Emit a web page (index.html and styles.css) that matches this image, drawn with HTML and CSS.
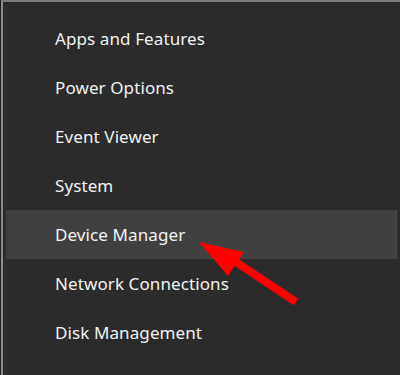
FILE: index.html
```html
<!DOCTYPE html>
<html lang="en">
  <head>
    <meta charset="UTF-8" />
    <meta name="viewport" content="width=device-width, initial-scale=1.0" />
    <title>Quick Link Menu</title>
    <link rel="stylesheet" href="styles.css">
  </head>
  <body>
    <div class="menu">
      <ul class="menu-list">
        <li class="menu-item">Apps and Features</li>
        <li class="menu-item">Power Options</li>
        <li class="menu-item">Event Viewer</li>
        <li class="menu-item">System</li>
        <li class="menu-item active">Device Manager</li>
        <li class="menu-item">Network Connections</li>
        <li class="menu-item">Disk Management</li>
      </ul>

      <!-- red pointer drawn over the menu -->
      <svg class="pointer" width="400" height="375" viewBox="0 0 400 375">
        <line x1="236" y1="262" x2="296" y2="302" stroke="#ff0000" stroke-width="8" />
        <polygon points="199,242 244,252 228,276" fill="#ff0000" />
      </svg>
    </div>
  </body>
</html>
```

FILE: styles.css
```css
html,
body {
  margin: 0;
  height: 100%;
}
body {
  background-color: #1f1f1f;
  font-family: "Noto Sans", "Open Sans", sans-serif;
}
.menu {
  position: relative;
  height: 373px;
  margin-left: 1px;
  background-color: #2b2b2b;
  border-top: 2px solid #7b7b7b;
  border-left: 2px solid #878c92;
}
.menu-list {
  list-style: none;
  margin: 0;
  padding: 12px 3px 0 3px;
}
.menu-item {
  height: 49px;
  line-height: 49px;
  padding-left: 49px;
  color: #f2f2f2;
  font-size: 17px;
  letter-spacing: 0.1px;
}
.menu-item.active {
  background-color: #404040;
  box-shadow: inset -1px 0 0 #4a4a4a;
}
.pointer {
  position: absolute;
  left: -3px;
  top: -2px;
}
```
